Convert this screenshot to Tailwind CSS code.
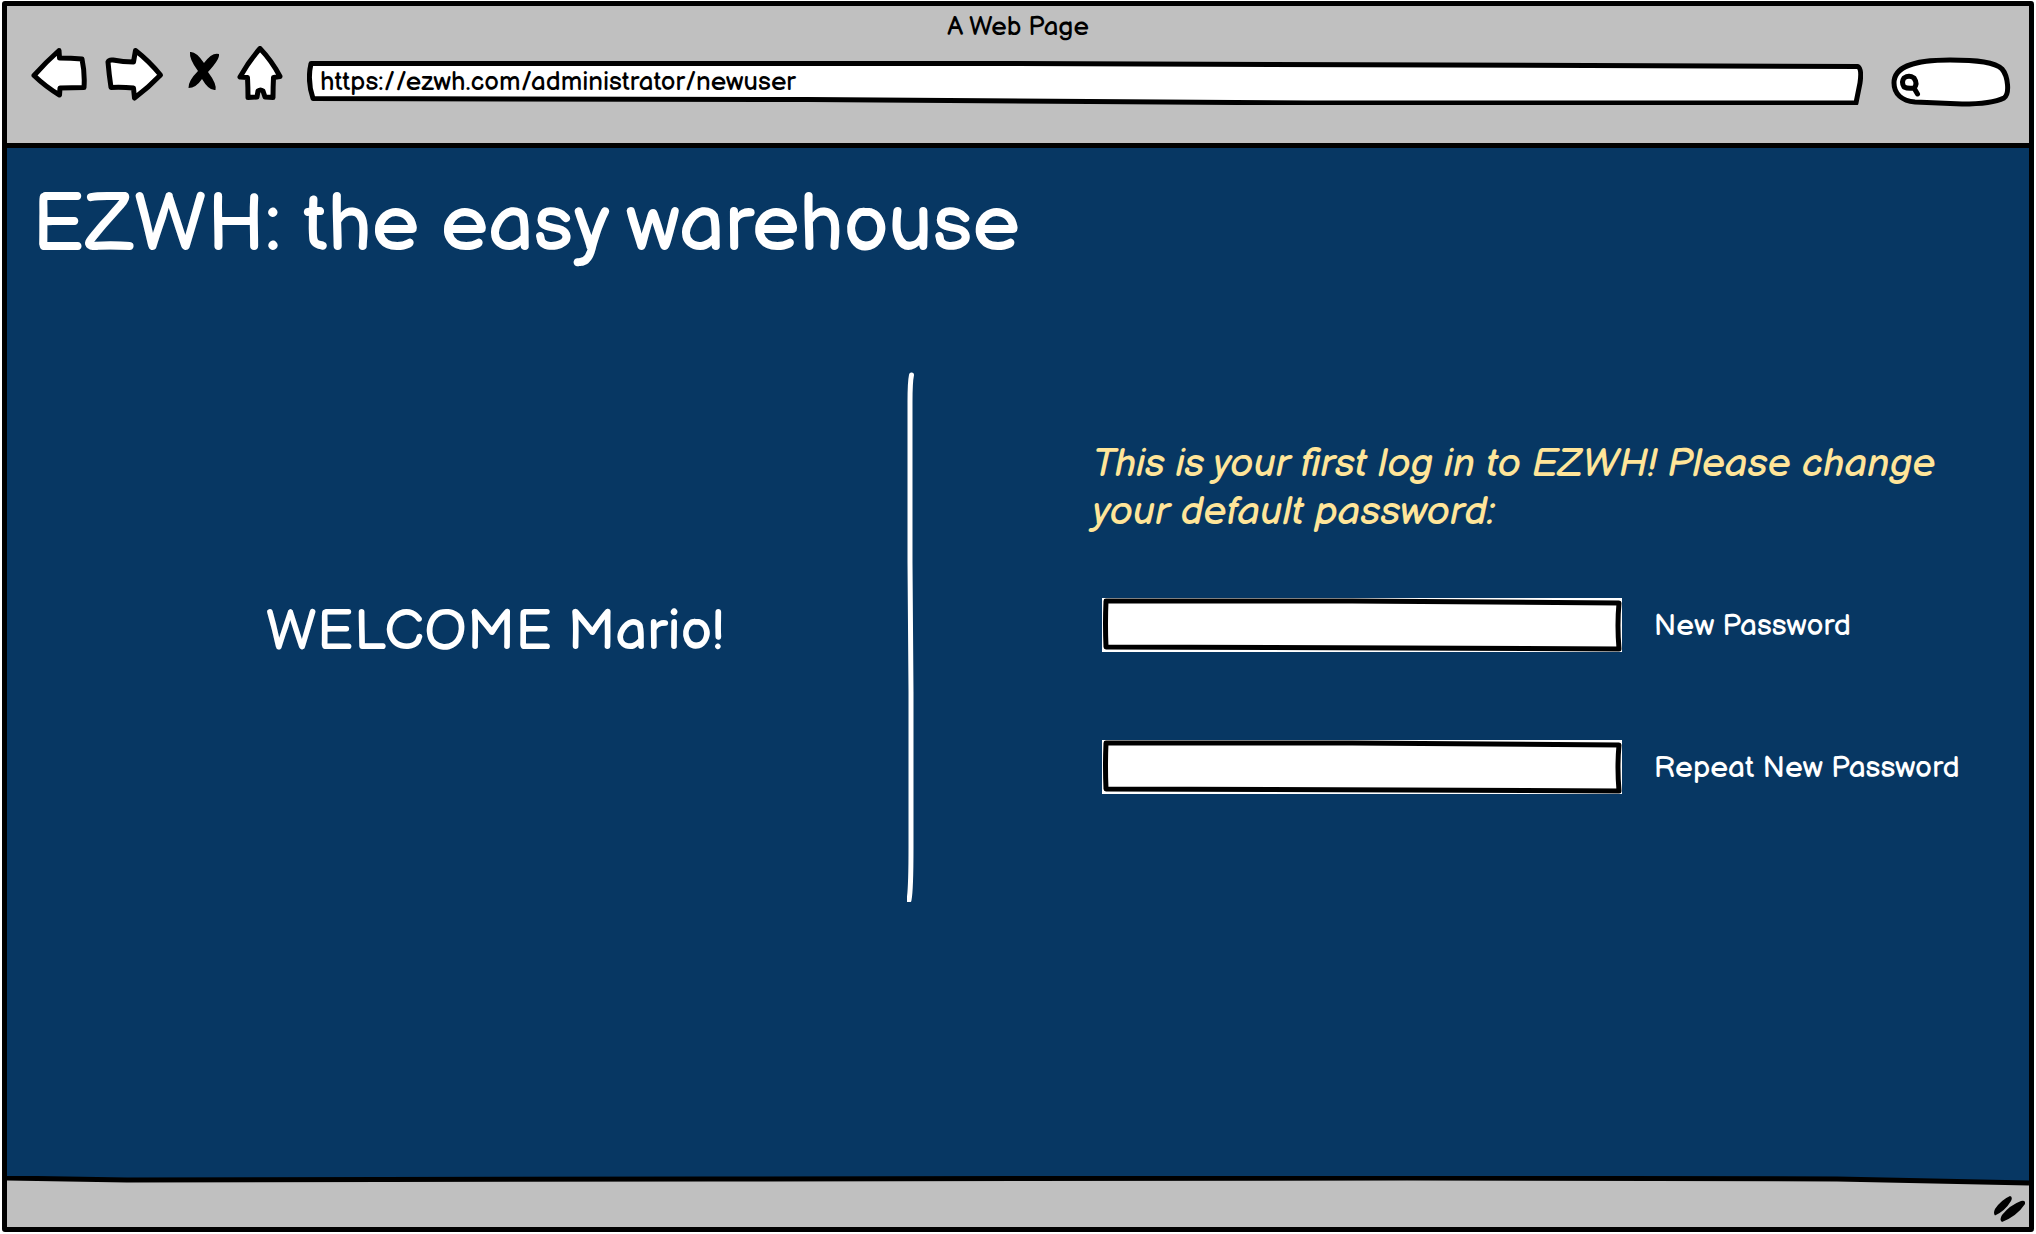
<!DOCTYPE html>
<html lang="en">
<head>
<meta charset="utf-8">
<meta name="viewport" content="width=device-width, initial-scale=1">
<title>A Web Page</title>
<script src="https://cdn.jsdelivr.net/npm/@tailwindcss/browser@4"></script>
</head>
<body class="bg-white font-['Balsamiq_Sans','Liberation_Sans',sans-serif]">
<div class="flex min-h-screen p-[2px] pt-px">
  <div class="flex min-w-0 flex-1 flex-col rounded-[3px] border-5 border-black bg-[#073763]">

    <!-- Browser toolbar -->
    <header class="flex h-[142px] flex-col border-b-5 border-black bg-[#c0c0c0]">
      <div class="h-10 pt-1.5 text-center text-[26px] leading-8 text-black">A Web Page</div>
      <div class="flex h-14 items-center pl-6 pr-[18px]">
        <button type="button" aria-label="Back" class="shrink-0">
          <svg class="h-14 w-14" viewBox="31 46 56 56" fill="#fff" stroke="#000" stroke-width="5" stroke-linejoin="round" stroke-linecap="round"><path d="M59 50.500Q46 62 34 75.500Q46 87 59.500 95L60 88Q72 87.500 84 87.500Q85 73 82 59Q71 58 59.500 58Z"/></svg>
        </button>
        <button type="button" aria-label="Forward" class="ml-[17px] shrink-0">
          <svg class="h-14 w-[60px]" viewBox="104 46 60 56" fill="#fff" stroke="#000" stroke-width="5" stroke-linejoin="round" stroke-linecap="round"><path d="M135.500 50.500Q149 61 160.500 75Q148 88 134.500 98L133.500 88Q122 87 111 87.500Q109 74 108 62Q109 59.500 113 60Q123 62 133.500 62Z"/></svg>
        </button>
        <button type="button" aria-label="Stop" class="ml-6 shrink-0">
          <svg class="h-14 w-8" viewBox="188 46 32 56"><path d="M190 52Q196 51 204 63Q212 52 219 54Q220 59 208 72Q217 84 215.500 90Q209 91 202 79Q196 88 188.500 88Q188 81 198 71Q189 59 190 52Z" fill="#000"/></svg>
        </button>
        <button type="button" aria-label="Home" class="ml-4 shrink-0">
          <svg class="h-14 w-12" viewBox="236 46 48 56" fill="#fff" stroke="#000" stroke-width="5" stroke-linejoin="round" stroke-linecap="round"><path d="M260 48.500Q249 61 240 77Q243 77 247.500 77.500Q248 88 248 97.500L257 97L258 91Q260.500 89 263 91L265 97L273 97.500Q273 87 273.500 77.500L280 76.500Q272 61 260 48.500Z"/></svg>
        </button>
        <div class="relative ml-[23px] mt-3.5 h-12 min-w-0 flex-1">
          <svg class="absolute inset-0 h-full w-full" viewBox="0 0 1554 48" preserveAspectRatio="none" fill="#fff" stroke="#000" stroke-width="5" stroke-linejoin="round" aria-hidden="true"><path vector-effect="non-scaling-stroke" d="M4 6.500L700 6.500L1549 9.500Q1553 12 1551 26L1547 46L1000 46L500 42.500L6 41.500Q0 24 4 6.500Z"/></svg>
          <input type="text" aria-label="Address" value="https://ezwh.com/administrator/newuser" class="relative block h-12 w-full bg-transparent pl-[13px] pr-4 pt-[3px] text-[26px] leading-8 text-black outline-none">
        </div>
        <div class="relative ml-7 mt-4 h-[50px] w-[120px] shrink-0">
          <svg class="absolute inset-0 h-full w-full" viewBox="1891 57 120 50" fill="#fff" stroke="#000" stroke-width="5" stroke-linecap="round" stroke-linejoin="round" aria-hidden="true"><path d="M1894 83C1894 68 1910 60 1950 60C1978 60 1995 62 2002 69C2008 76 2010 94 2004 98C1996 102 1978 104 1962 104Q1940 103 1915 102C1902 101 1894 94 1894 83Z"/><path d="M1904 78Q1909 74.500 1914 78Q1918 84 1914 88Q1908 89 1904 87Q1901 82 1904 78ZM1914 88L1917.500 94"/></svg>
          <input type="search" aria-label="Search" class="relative block h-full w-full bg-transparent pl-8 pr-4 text-xl text-black outline-none">
        </div>
      </div>
    </header>

    <!-- Page content -->
    <main class="flex-1 pt-[30px] text-white">
      <h1 class="pl-[25px] text-[80px] leading-24">EZWH: the easy warehouse</h1>
      <div class="mt-[98px] grid min-h-[530px] grid-cols-[44.5%_8px_1fr]">
        <section class="flex items-center justify-center pb-2 pl-[76px]">
          <h2 class="text-[56px] leading-16">WELCOME Mario!</h2>
        </section>
        <svg class="h-full w-full" viewBox="0 0 8 530" preserveAspectRatio="none" fill="none" stroke="#fff" stroke-width="5" stroke-linecap="round" aria-hidden="true"><path d="M4.500 3Q3 10 3 30L3 190L4 320L4 475Q4 518 2 528" vector-effect="non-scaling-stroke"/></svg>
        <form class="pl-[178px] pr-12 pt-[68px]">
          <p class="text-[40px] italic leading-12 text-[#ffe599]">This is your first log in to EZWH! Please change your default password:</p>
          <div class="ml-[9px] mt-[62px] flex flex-col gap-[88px]">
            <div class="flex items-center gap-8">
              <div class="relative h-[54px] w-[520px] bg-white">
                <svg class="absolute inset-0 h-full w-full" viewBox="0 0 520 54" preserveAspectRatio="none" fill="none" stroke="#000" stroke-width="5" stroke-linejoin="round" aria-hidden="true"><path vector-effect="non-scaling-stroke" d="M4 3L250 3L517 5Q515 27 517 51L300 50L4 49Q3 26 4 3Z"/></svg>
                <input id="new-password" type="password" class="relative block h-full w-full bg-transparent px-4 text-[30px] text-black outline-none">
              </div>
              <label for="new-password" class="whitespace-nowrap pt-0.5 text-[30px] leading-9">New Password</label>
            </div>
            <div class="flex items-center gap-8">
              <div class="relative h-[54px] w-[520px] bg-white">
                <svg class="absolute inset-0 h-full w-full" viewBox="0 0 520 54" preserveAspectRatio="none" fill="none" stroke="#000" stroke-width="5" stroke-linejoin="round" aria-hidden="true"><path vector-effect="non-scaling-stroke" d="M4 3L250 3L517 5Q515 27 517 51L300 50L4 49Q3 26 4 3Z"/></svg>
                <input id="repeat-password" type="password" class="relative block h-full w-full bg-transparent px-4 text-[30px] text-black outline-none">
              </div>
              <label for="repeat-password" class="whitespace-nowrap pt-0.5 text-[30px] leading-9">Repeat New Password</label>
            </div>
          </div>
        </form>
      </div>
    </main>

    <!-- Status bar with resize grip -->
    <footer class="relative flex h-[51px] items-end justify-end px-1 pb-1">
      <svg class="absolute inset-0 h-full w-full" viewBox="0 0 2022 51" preserveAspectRatio="none" aria-hidden="true"><path d="M0 3L1840 3L2022 7V51H0Z" fill="#c0c0c0"/><path d="M0 2L120 4L700 3L1400 2L1830 3L2022 7" fill="none" stroke="#000" stroke-width="5" vector-effect="non-scaling-stroke"/></svg>
      <svg class="relative h-7 w-8" viewBox="1992 1195 32 28" aria-hidden="true"><path d="M2009 1196Q2012 1197 2010 1201Q2004 1211 1994 1215.500Q1992 1213 1994 1209Q2000 1200 2009 1196ZM2020 1201Q2025 1200 2024 1204Q2016 1216 2001 1222Q1998 1220 2001 1215Q2009 1205 2020 1201Z"/></svg>
    </footer>
  </div>
</div>
</body>
</html>
